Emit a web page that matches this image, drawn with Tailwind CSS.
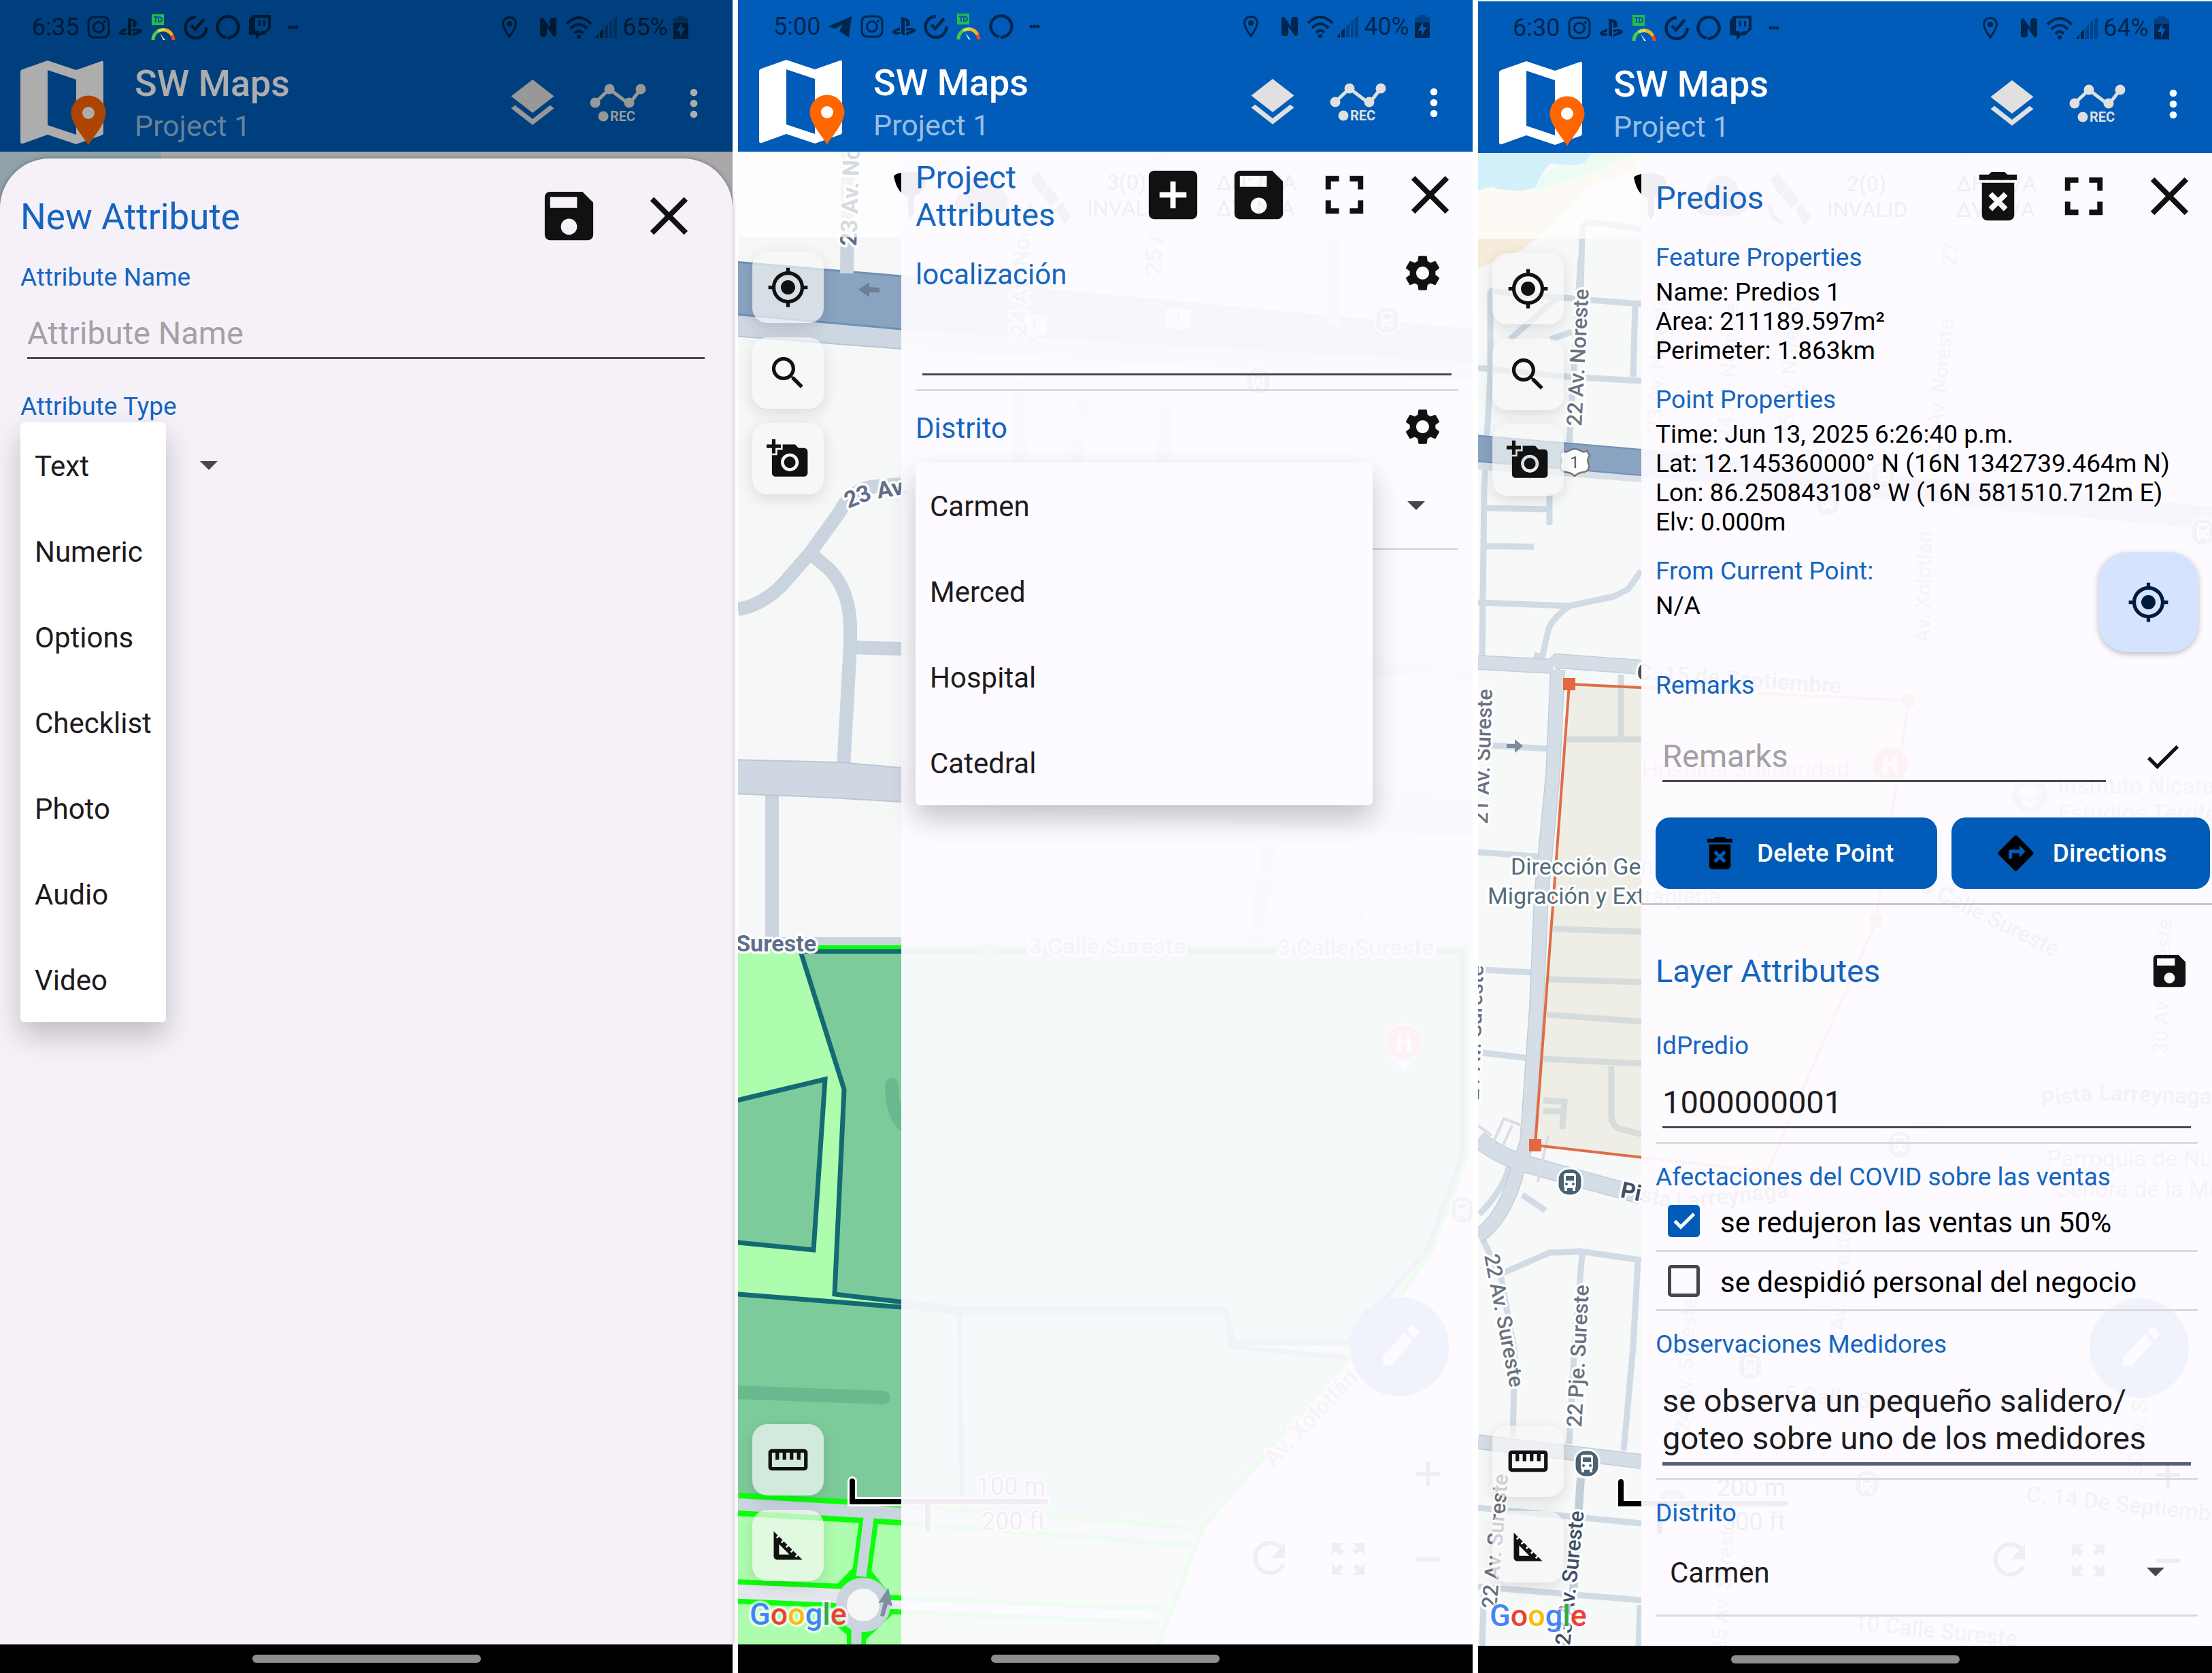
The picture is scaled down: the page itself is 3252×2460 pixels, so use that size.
<!DOCTYPE html>
<html lang="es">
<head>
<meta charset="utf-8">
<title>SW Maps</title>
<script src="https://cdn.jsdelivr.net/npm/@tailwindcss/browser@4"></script>
</head>
<body class="bg-white font-['Roboto',sans-serif] text-[#111]">

<svg width="0" height="0" class="absolute" aria-hidden="true">
  <defs>
    <symbol id="save" viewBox="0 0 24 24"><path d="M17 3H5c-1.11 0-2 .9-2 2v14c0 1.1.89 2 2 2h14c1.1 0 2-.9 2-2V7l-4-4zm-5 16c-1.66 0-3-1.34-3-3s1.34-3 3-3 3 1.34 3 3-1.34 3-3 3zm3-10H5V5h10v4z"/></symbol>
    <symbol id="close" viewBox="0 0 24 24"><path d="M19 6.41L17.59 5 12 10.59 6.41 5 5 6.41 10.59 12 5 17.59 6.41 19 12 13.41 17.59 19 19 17.59 13.41 12z"/></symbol>
    <symbol id="addbox" viewBox="0 0 24 24"><path d="M19 3H5c-1.11 0-2 .9-2 2v14c0 1.1.89 2 2 2h14c1.1 0 2-.9 2-2V5c0-1.1-.9-2-2-2zm-2 10h-4v4h-2v-4H7v-2h4V7h2v4h4v2z"/></symbol>
    <symbol id="full" viewBox="0 0 24 24"><path d="M7 14H5v5h5v-2H7v-3zm-2-4h2V7h3V5H5v5zm12 7h-3v2h5v-5h-2v3zM14 5v2h3v3h2V5h-5z"/></symbol>
    <symbol id="gear" viewBox="0 0 24 24"><path d="M19.14 12.94c.04-.3.06-.61.06-.94 0-.32-.02-.64-.07-.94l2.03-1.58c.18-.14.23-.41.12-.61l-1.92-3.32c-.12-.22-.37-.29-.59-.22l-2.39.96c-.5-.38-1.03-.7-1.62-.94L14.4 2.81c-.04-.24-.24-.41-.48-.41h-3.84c-.24 0-.43.17-.47.41l-.36 2.54c-.59.24-1.13.57-1.62.94l-2.39-.96c-.22-.08-.47 0-.59.22L2.74 8.87c-.12.21-.08.47.12.61l2.03 1.58c-.05.3-.09.63-.09.94s.02.64.07.94l-2.03 1.58c-.18.14-.23.41-.12.61l1.92 3.32c.12.22.37.29.59.22l2.39-.96c.5.38 1.03.7 1.62.94l.36 2.54c.05.24.24.41.48.41h3.84c.24 0 .44-.17.47-.41l.36-2.54c.59-.24 1.13-.56 1.62-.94l2.39.96c.22.08.47 0 .59-.22l1.92-3.32c.12-.22.07-.47-.12-.61l-2.01-1.58zM12 15.6c-1.98 0-3.6-1.62-3.6-3.6s1.62-3.6 3.6-3.6 3.6 1.62 3.6 3.6-1.62 3.6-3.6 3.6z"/></symbol>
    <symbol id="locate" viewBox="0 0 24 24"><path d="M12 8c-2.21 0-4 1.79-4 4s1.79 4 4 4 4-1.79 4-4-1.79-4-4-4zm8.94 3c-.46-4.17-3.77-7.48-7.94-7.94V1h-2v2.06C6.83 3.52 3.52 6.83 3.06 11H1v2h2.06c.46 4.17 3.77 7.48 7.94 7.94V23h2v-2.06c4.17-.46 7.48-3.77 7.94-7.94H23v-2h-2.06zM12 19c-3.87 0-7-3.13-7-7s3.13-7 7-7 7 3.13 7 7-3.13 7-7 7z"/></symbol>
    <symbol id="search" viewBox="0 0 24 24"><path d="M15.5 14h-.79l-.28-.27C15.41 12.59 16 11.11 16 9.5 16 5.91 13.09 3 9.5 3S3 5.91 3 9.5 5.91 16 9.5 16c1.61 0 3.09-.59 4.23-1.57l.27.28v.79l5 4.99L20.49 19l-4.99-5zm-6 0C7.01 14 5 11.99 5 9.5S7.01 5 9.5 5 14 7.01 14 9.5 11.99 14 9.5 14z"/></symbol>
    <symbol id="photo" viewBox="0 0 24 24"><path d="M3 4V1h2v3h3v2H5v3H3V6H0V4h3zm3 6V7h3V4h7l1.83 2H21c1.1 0 2 .9 2 2v12c0 1.1-.9 2-2 2H5c-1.1 0-2-.9-2-2V10h3zm7 9c2.76 0 5-2.24 5-5s-2.24-5-5-5-5 2.24-5 5 2.24 5 5 5zm-3.2-5c0 1.77 1.43 3.2 3.2 3.2s3.2-1.43 3.2-3.2-1.43-3.2-3.2-3.2-3.2 1.43-3.2 3.2z"/></symbol>
    <symbol id="ruler" viewBox="0 0 24 24"><path d="M21 6H3c-1.1 0-2 .9-2 2v8c0 1.1.9 2 2 2h18c1.1 0 2-.9 2-2V8c0-1.1-.9-2-2-2zm0 10H3V8h2v4h2V8h2v4h2V8h2v4h2V8h2v4h2V8h2v8z"/></symbol>
    <symbol id="square" viewBox="0 0 24 24"><path d="M17.66 17.66l-1.06 1.06-.71-.71 1.06-1.06-1.94-1.94-1.06 1.06-.71-.71 1.06-1.06-1.94-1.94-1.06 1.06-.71-.71 1.06-1.06L9.7 9.7l-1.06 1.06-.71-.71 1.06-1.06-1.94-1.94-1.06 1.06-.71-.71 1.06-1.06L4 4v14c0 1.1.9 2 2 2h14l-2.34-2.34zM7 17v-5.76L12.76 17H7z"/></symbol>
    <symbol id="trash" viewBox="0 0 24 24"><path d="M6 19c0 1.1.9 2 2 2h8c1.1 0 2-.9 2-2V7H6v12zm2.46-7.12l1.41-1.41L12 12.59l2.12-2.12 1.41 1.41L13.41 14l2.12 2.12-1.41 1.41L12 15.41l-2.12 2.12-1.41-1.41L10.59 14l-2.13-2.12zM15.5 4l-1-1h-5l-1 1H5v2h14V4z"/></symbol>
    <symbol id="directions" viewBox="0 0 24 24"><path d="M21.71 11.29l-9-9c-.39-.39-1.02-.39-1.41 0l-9 9c-.39.39-.39 1.02 0 1.41l9 9c.39.39 1.02.39 1.41 0l9-9c.39-.38.39-1.01 0-1.41zM14 14.5V12h-4v3H8v-4c0-.55.45-1 1-1h5V7.5l3.5 3.5-3.5 3.5z"/></symbol>
    <symbol id="check" viewBox="0 0 24 24"><path d="M9 16.17L4.83 12l-1.42 1.41L9 19 21 7l-1.41-1.41z"/></symbol>
    <symbol id="layers" viewBox="0 0 24 24"><path d="M11.99 18.54l-7.37-5.73L3 14.07l9 7 9-7-1.63-1.27-7.38 5.74zM12 16l7.36-5.73L21 9l-9-7-9 7 1.63 1.27L12 16z"/></symbol>
    <symbol id="more" viewBox="0 0 12 44"><circle cx="6" cy="6" r="5.3"/><circle cx="6" cy="22" r="5.3"/><circle cx="6" cy="38" r="5.3"/></symbol>
    <symbol id="rec" viewBox="0 0 84 58">
      <path d="M8 28 29 8 58 30 75 8" fill="none" stroke="currentColor" stroke-width="5"/>
      <circle cx="8" cy="28" r="7.5"/><circle cx="29" cy="8" r="7.5"/><circle cx="58" cy="28" r="7.5"/><circle cx="75" cy="8" r="7.5"/><circle cx="20" cy="48" r="7.5"/>
      <text x="30" y="55" font-size="20" font-weight="700">REC</text>
    </symbol>
    <symbol id="logo" viewBox="0 0 126 125">
      <path fill="#fff" fill-rule="evenodd" d="M0 17Q0 14 3 13L40 0 82 14 119 1Q122 0 122 4V107Q122 109 119 110L82 123 40 109 4 122Q0 123 0 119zM40 14V95L82 109V28z"/>
      <path fill="#f60" d="M100 51.500a25.500 25.500 0 0 1 25.500 25.500c0 16-19 36-25.500 47.500C93.500 113 74.500 93 74.500 77A25.500 25.500 0 0 1 100 51.500z"/>
      <circle cx="100" cy="77" r="9" fill="#fff"/>
    </symbol>
    <symbol id="caret" viewBox="0 0 26 13"><path d="M0 0h26L13 13z"/></symbol>
    <symbol id="ig" viewBox="0 0 36 36"><rect x="3" y="3" width="30" height="30" rx="8" fill="none" stroke="currentColor" stroke-width="3"/><circle cx="18" cy="18" r="7.500" fill="none" stroke="currentColor" stroke-width="3"/><circle cx="27" cy="10" r="2"/></symbol>
    <symbol id="ps" viewBox="0 0 36 36"><path d="M14 4l7 2c4 1 6 4 6 7 0 4-2 6-6 4V10q-1-2-2 0v21l-5-2zM12 19v4l-6 2.500 2 1 4-1v3.500c-6 2-11 0-11-3 0-3 6-5 11-7zM21 21c6-2 14-1 14 2.500 0 3-6 4.500-14 7.500v-4l7-3-2-1-5 1.500z"/></symbol>
    <symbol id="speed" viewBox="0 0 36 38"><rect x="1" y="0" width="18" height="16" fill="#1fbf46"/><path d="M4 4h6M7 4v8M11 4v7q5 0 5-3.500T11 4" stroke="#0f4fb0" stroke-width="2" fill="none"/><path d="M3 38A15 15 0 0 1 10 25" stroke="#4cc94a" stroke-width="5" fill="none"/><path d="M10 25A15 15 0 0 1 21 23" stroke="#d5e04a" stroke-width="5" fill="none"/><path d="M21 23A15 15 0 0 1 31 31" stroke="#fbb31c" stroke-width="5" fill="none"/><path d="M31 31A15 15 0 0 1 33 38" stroke="#f04a23" stroke-width="5" fill="none"/><path d="M13 28l8 10h-3z" fill="#dfe9f3"/></symbol>
    <symbol id="tick" viewBox="0 0 36 36"><path d="M18 3A15.500 15.500 0 1 0 33.500 18" fill="none" stroke="currentColor" stroke-width="4.500"/><path d="M11 15l6 6L30 6" fill="none" stroke="currentColor" stroke-width="4.500"/></symbol>
    <symbol id="ring" viewBox="0 0 36 36"><path d="M15 33A15.500 15.500 0 1 1 21 33L17 35" fill="none" stroke="currentColor" stroke-width="4.500"/></symbol>
    <symbol id="twitch" viewBox="0 0 36 36"><path fill-rule="evenodd" d="M8 0h26v20l-9 9h-6l-7 7v-7H2V7zm3 4v19h6v4l4-4h5l4-4V4zM16 8h3v8h-3zm7 0h3v8h-3z"/></symbol>
    <symbol id="plane" viewBox="0 0 36 36"><path d="M35 3 31 34 17 25 22 14 12 21 0 18z"/></symbol>
    <symbol id="pin" viewBox="0 0 24 34"><path d="M12 2.500c6 0 9.500 4 9.500 9C21.500 18 12 31 12 31S2.500 18 2.500 11.500c0-5 3.500-9 9.500-9z" fill="none" stroke="currentColor" stroke-width="3"/><circle cx="12" cy="12" r="4"/></symbol>
    <symbol id="nfc" viewBox="0 0 26 28"><path d="M1 3Q1 0 5 0L15 14V4Q15 1 18 0H23Q25 1 25 4V25Q25 28 21 28L11 14V24Q11 27 8 28H4Q1 27 1 24z"/></symbol>
    <symbol id="wifi" viewBox="0 0 40 34"><path d="M2 12Q20-6 38 12M8 19Q20 7 32 19M14 26Q20 19 26 26" fill="none" stroke="currentColor" stroke-width="4"/><circle cx="20" cy="31" r="3"/></symbol>
    <symbol id="signal" viewBox="0 0 32 32"><path d="M0 32l5-7v7zM7 23l5-5v14H7z"/><path opacity=".45" d="M14 16l5-5v21h-5zM21 9l4-4v27h-4zM27 4l5-4v32h-5z"/></symbol>
    <symbol id="battery" viewBox="0 0 22 34"><path opacity=".45" d="M6 0h10v3h6v8H0V3h6z"/><path fill-rule="evenodd" d="M0 11h22v23H0zm12-1-7 13h5v8l7-13h-5z"/></symbol>
    <symbol id="bus" viewBox="0 0 40 44"><rect x="2" y="2" width="36" height="40" rx="16" fill="#4a6274" stroke="#fff" stroke-width="3"/><rect x="11" y="9" width="18" height="22" rx="4" fill="#fff"/><rect x="14" y="13" width="12" height="7" fill="#4a6274"/><circle cx="15" cy="25" r="2" fill="#4a6274"/><circle cx="25" cy="25" r="2" fill="#4a6274"/><path d="M12 30h4v5h-4zM24 30h4v5h-4z" fill="#fff"/></symbol>
    <symbol id="shield" viewBox="0 0 48 44"><path d="M6 5q5 3 9 0 5-3 9-3t9 3q4 3 9 0l4 7q-5 6-1 14 1 8-7 10-9 1-14 6-5-5-14-6-8-2-7-10 4-8-1-14z" fill="#fff" stroke="#777" stroke-width="2.500"/><text x="24" y="30" text-anchor="middle" font-size="24" fill="#555">1</text></symbol>
    <symbol id="hospital" viewBox="0 0 64 80"><path d="M32 3a28 28 0 0 1 28 28c0 20-22 26-28 44C26 57 4 51 4 31A28 28 0 0 1 32 3z" fill="#f0f0f0"/><circle cx="32" cy="31" r="26" fill="#f2554a"/><path d="M22 18h6v10h8V18h6v27h-6V34h-8v11h-6z" fill="#fff"/></symbol>
    <symbol id="hud" viewBox="0 0 1080 2195">
      <path d="M229 36q4-6 26-6 14 0 22 10-2 20-18 26v24l-5 8-4-8V66q-16-4-21-30z"/>
      <path d="M335 92a16 16 0 0 1 0-32 24 24 0 0 1 48-6 20 20 0 0 1 0 38z" opacity=".7"/>
      <path d="M430 40l12-12 14 22-12 12zM446 62l12-12 14 20-12 12zM466 84l10-10 14 20-10 12zM426 76q0 26 22 28v-6q-14-2-16-22z" opacity=".7"/>
      <g font-size="32"><text x="703" y="56">ΔH: N/A</text><text x="703" y="94">ΔV: N/A</text><text x="513" y="94">INVALID</text></g>
      <circle cx="972" cy="1757" r="73" fill="#0a64b4"/><path d="M948 1784v-13l32-34 12 12-32 35zM984 1733l8-8 11 11-8 9z" fill="#fff"/>
      <path d="M996 1941h36v6h-36zM1011 1926h6v36h-6zM996 2067h36v6h-36z"/>
      <path d="M801 2056a22 22 0 1 0 1 22" fill="none" stroke="currentColor" stroke-width="6"/><path d="M804 2046v22h-21z"/>
      <path d="M873 2046h17l-6 6 6 6-6 6-5-6-6 6zM921 2046v17l-6-6-6 6-5-6 6-5-6-6zM873 2093v-17l6 6 6-6 5 6-6 5 6 6zM921 2093h-17l6-6-6-6 5-5 6 6 6-6z"/>
    </symbol>
  </defs>
</svg>

<div class="grid min-h-screen grid-cols-[1077fr_1080fr_1079fr] gap-2">

  <!-- New attribute -->
  <section class="flex min-w-0 flex-col bg-[#aaa8ab]">
    <header class="bg-[#003f7d]">
      <div class="flex h-[80px] items-center justify-between pl-[47px] pr-[65px] text-[36px] leading-[42px] text-[#001a33]">
        <div class="flex items-center gap-[11px]">
          <span>6:35</span>
          <svg class="size-[36px] fill-current"><use href="#ig"/></svg><svg class="size-[36px] fill-current"><use href="#ps"/></svg><svg class="size-[38px]"><use href="#speed"/></svg><svg class="size-[36px] fill-current"><use href="#tick"/></svg><svg class="size-[36px] fill-current"><use href="#ring"/></svg><svg class="size-[36px] fill-current"><use href="#twitch"/></svg>
          <svg class="ml-3 h-[6px] w-[16px] fill-current" viewBox="0 0 16 6"><circle cx="3" cy="3" r="2.500"/><circle cx="8" cy="3" r="2.500"/><circle cx="13" cy="3" r="2.500"/></svg>
        </div>
        <div class="flex items-center gap-2">
          <svg class="mr-6 h-[34px] w-[24px] fill-current"><use href="#pin"/></svg><svg class="mr-1 h-[28px] w-[26px] fill-current"><use href="#nfc"/></svg><svg class="h-[34px] w-[40px] fill-current"><use href="#wifi"/></svg><svg class="-ml-1 h-[32px] w-[32px] fill-current"><use href="#signal"/></svg>
          <span>65%</span>
          <svg class="h-[34px] w-[22px] fill-current"><use href="#battery"/></svg>
        </div>
      </div>
      <div class="flex h-[143px] items-center pl-[30px] pr-[10px] brightness-[.68]">
        <svg class="h-[125px] w-[126px]"><use href="#logo"/></svg>
        <div class="ml-[42px] flex-1 pt-[4px]">
          <h1 class="text-[54px] leading-[63px] font-medium text-white">SW Maps</h1>
          <p class="text-[43px] leading-[63px] text-[#99bee3]">Project 1</p>
        </div>
        <button aria-label="Layers" class="grid w-[126px] place-items-center"><svg class="size-[84px] fill-[#e0e0e0]"><use href="#layers"/></svg></button>
        <button aria-label="Record track" class="grid w-[126px] place-items-center"><svg class="h-[58px] w-[84px] fill-[#e0e0e0] text-[#e0e0e0]"><use href="#rec"/></svg></button>
        <button aria-label="More" class="grid w-[95px] place-items-center"><svg class="h-[44px] w-[12px] fill-white"><use href="#more"/></svg></button>
      </div>
    </header>
    <main class="flex flex-1 flex-col bg-linear-to-r from-[#90a2a9] from-22% to-[#aaa8ab] to-22% pt-[10px]">
      <form class="flex-1 rounded-t-[73px] bg-[#f6f1f9] pt-[37px] pr-[31px] pl-[30px] shadow-[0_0_6px_rgba(0,0,0,.35)]">
        <div class="flex h-[95px] items-center">
          <h2 class="flex-1 pt-[4px] text-[53px] leading-[61px] text-[#1565c0]">New Attribute</h2>
          <button type="button" aria-label="Save" class="mr-[52px]"><svg class="size-[95px] fill-[#111]"><use href="#save"/></svg></button>
          <button type="button" aria-label="Close" class="mr-[15px]"><svg class="size-[95px] fill-[#111]"><use href="#close"/></svg></button>
        </div>
        <label for="attr-name" class="mt-[21px] block text-[37px] leading-[43px] text-[#1565c0]">Attribute Name</label>
        <div class="mt-[23px] px-[10px]"><input id="attr-name" placeholder="Attribute Name" class="block h-[76px] w-full border-b-3 border-[#4a474e] pt-[2px] text-[47px] leading-[55px] outline-none placeholder:text-[#a3a0a6]"></div>
        <label for="attr-type" class="mt-12 block text-[37px] leading-[43px] text-[#1565c0]">Attribute Type</label>
        <div class="relative mt-[2px] w-[339px]">
          <select id="attr-type" class="block h-[126px] w-full appearance-none pl-[21px] text-[42px] text-[#1d1b20]"><option>Text</option></select>
          <svg class="pointer-events-none absolute top-[57px] right-[49px] h-[13px] w-[26px] fill-[#49454f]"><use href="#caret"/></svg>
          <ul role="listbox" class="absolute top-0 left-0 rounded-[6px] bg-white text-[42px] leading-[122px] text-[#1d1b20] shadow-[0_20px_42px_rgba(0,0,0,.22)] [&>li]:px-[21px] [&>li]:pt-[4px]">
            <li role="option">Text</li><li role="option">Numeric</li><li role="option">Options</li><li role="option">Checklist</li><li role="option">Photo</li><li role="option">Audio</li><li role="option">Video</li>
          </ul>
        </div>
      </form>
    </main>
    <footer class="grid h-[42px] place-items-center bg-black"><div class="h-[12px] w-[336px] rounded-full bg-[#8e8e8e]"></div></footer>
  </section>

  <!-- Project attributes -->
  <section class="flex min-w-0 flex-col">
    <header class="bg-[#005cb8]">
      <div class="flex h-[78px] items-center justify-between pl-[52px] pr-[63px] text-[36px] leading-[42px] text-[#00264d]">
        <div class="flex items-center gap-[11px]">
          <span>5:00</span>
          <svg class="size-[36px] fill-current"><use href="#plane"/></svg><svg class="size-[36px] fill-current"><use href="#ig"/></svg><svg class="size-[36px] fill-current"><use href="#ps"/></svg><svg class="size-[36px] fill-current"><use href="#tick"/></svg><svg class="size-[38px]"><use href="#speed"/></svg><svg class="size-[36px] fill-current"><use href="#ring"/></svg>
          <svg class="ml-3 h-[6px] w-[16px] fill-current" viewBox="0 0 16 6"><circle cx="3" cy="3" r="2.500"/><circle cx="8" cy="3" r="2.500"/><circle cx="13" cy="3" r="2.500"/></svg>
        </div>
        <div class="flex items-center gap-2">
          <svg class="mr-6 h-[34px] w-[24px] fill-current"><use href="#pin"/></svg><svg class="mr-1 h-[28px] w-[26px] fill-current"><use href="#nfc"/></svg><svg class="h-[34px] w-[40px] fill-current"><use href="#wifi"/></svg><svg class="-ml-1 h-[32px] w-[32px] fill-current"><use href="#signal"/></svg>
          <span>40%</span>
          <svg class="h-[34px] w-[22px] fill-current"><use href="#battery"/></svg>
        </div>
      </div>
      <div class="flex h-[145px] items-center pl-[31px] pr-[10px]">
        <svg class="h-[125px] w-[126px]"><use href="#logo"/></svg>
        <div class="ml-[42px] flex-1 pt-[4px]">
          <h1 class="text-[54px] leading-[63px] font-medium text-white">SW Maps</h1>
          <p class="text-[43px] leading-[63px] text-[#99bee3]">Project 1</p>
        </div>
        <button aria-label="Layers" class="grid w-[126px] place-items-center"><svg class="size-[84px] fill-[#e0e0e0]"><use href="#layers"/></svg></button>
        <button aria-label="Record track" class="grid w-[126px] place-items-center"><svg class="h-[58px] w-[84px] fill-[#e0e0e0] text-[#e0e0e0]"><use href="#rec"/></svg></button>
        <button aria-label="More" class="grid w-[95px] place-items-center"><svg class="h-[44px] w-[12px] fill-white"><use href="#more"/></svg></button>
      </div>
    </header>
    <main class="relative flex flex-1 overflow-hidden">
      <svg class="absolute inset-0 size-full" viewBox="0 223 1080 2195" preserveAspectRatio="xMinYMin slice" aria-hidden="true">
        <rect y="223" width="1080" height="2195" fill="#f6f7f7"/>
        <g fill="none" stroke="#c9d4df" stroke-width="20">
          <path d="M-5 462L240 484 1085 531V560L240 513-5 494z" fill="#cdd7e1" stroke="#b5c6d6" stroke-width="2"/>
          <path d="M-5 385L240 406 1085 486V531L240 484-5 462z" fill="#8aa3c0" stroke="#6e90b8" stroke-width="3"/>
          <path d="M162 223L160 402M412 560L415 700M505 580L495 760M630 600L620 760M875 350V480"/>
          <path d="M240 712L195 716Q165 722 150 752L106 813 65 860Q35 890 0 896M106 813L135 838Q165 870 165 925V950L155 1130M165 952L240 954 1080 990M50 1165V1380M780 1245L760 1380M780 1306H870M770 1352H920"/>
        </g>
        <path d="M-5 1117L150 1121 240 1129 1085 1170V1230L240 1179 120 1172-5 1167z" fill="#cfd8e2" stroke="#b9c8d5" stroke-width="2"/>
        <path d="M0 1384H1080" stroke="#c9d4df" stroke-width="12"/>
        <path d="M-20 1394H1070V1701L1020 1836 975 1903 899 1994 683 2245 610 2440H-20z" fill="#aefcae" stroke="#0bff0b" stroke-width="8"/>
        <g fill="#7dcb9b" stroke="#136a72" stroke-width="7">
          <path d="M92 1399H1064V1701L1014 1836 895 1975H730L718 1925H332L142 1903 156 1602z"/>
          <path d="M-10 1620L128 1587 111 1838-10 1826z"/>
        </g>
        <path d="M0 1903L240 1922 332 1930H718L725 1980 895 1996 680 2239 240 2219 0 2198z" fill="#7dcb9b"/>
        <path d="M0 1903L240 1922 332 1930H718L725 1980 895 1996" fill="none" stroke="#136a72" stroke-width="7"/>
        <path d="M325 1932L330 2220" stroke="#136a72" stroke-width="7"/>
        <path d="M-10 2047L214 2055M226 1595Q226 1640 245 1655H725Q755 1660 758 1700V1790Q760 1830 800 1838H1000M345 1670V1800Q350 1830 380 1832H450M368 1405V1560" fill="none" stroke="#68b98d" stroke-width="20" stroke-linecap="round"/>
        <g fill="none" stroke="#0bff0b">
          <path d="M0 2212L240 2226 675 2260" stroke-width="34"/><path d="M193 2231L181 2318" stroke-width="28"/><path d="M-5 2340L155 2347" stroke-width="36"/><path d="M215 2359L240 2360 620 2376" stroke-width="28"/><path d="M174 2390V2420" stroke-width="28"/>
          <path d="M181 2310L150 2342M181 2310L216 2354M218 2366L180 2402M145 2375L172 2398" stroke-width="24"/>
        </g>
        <g fill="none" stroke="#c9d4df">
          <path d="M0 2212L240 2226 675 2260" stroke-width="18"/><path d="M193 2225L181 2318" stroke-width="15"/><path d="M-5 2340L155 2347" stroke="#e3e6ea" stroke-width="21"/><path d="M215 2359L240 2360 620 2376" stroke="#eceff3" stroke-width="13"/><path d="M174 2390V2420" stroke-width="15"/>
        </g>
        <circle cx="184" cy="2360" r="40" fill="#c9d4df"/><circle cx="184" cy="2360" r="24" fill="#f6f7f7"/>
        <path d="M209 2376l5-20-8 1 15-22 6 27-7-3-5 18z" fill="#7f8fa0"/>
        <path d="M177 426l16-11v7l15 1v7h-15v7z" fill="#6d7f95"/>
        <use href="#shield" x="411" y="458" width="48" height="44"/><use href="#shield" x="623" y="447" width="48" height="44"/>
        <use href="#bus" x="934" y="449" width="40" height="44"/><use href="#bus" x="745" y="538" width="40" height="44"/><use href="#bus" x="1045" y="1757" width="40" height="44"/>
        <use href="#hospital" x="947" y="1502" width="64" height="80"/>
        <g font-size="34" font-weight="700" fill="#5f7089" stroke="#fff" stroke-width="7" stroke-linejoin="round" paint-order="stroke">
          <text x="115" y="1399" text-anchor="end">Sureste</text><text x="427" y="1403">3 Calle Sureste</text><text x="793" y="1405">3 Calle Sureste</text>
          <text transform="translate(174 362) rotate(-88)">23 Av. Noreste</text><text transform="translate(424 495) rotate(-88)">24 Av. Noreste</text><text transform="translate(622 405) rotate(-88)">25 Av. Noreste</text>
          <text transform="translate(162 748) rotate(-22)">23</text><text transform="translate(206 733) rotate(-9)">Av. Noreste</text>
          <text transform="translate(787 2158) rotate(-46)">Av. Xolotlán</text>
        </g>
        <rect y="223" width="1080" height="126" fill="#fff" opacity=".75"/>
        <use href="#hud" y="223" width="1080" height="2195"/><text x="542" y="279" font-size="32">3(0)</text>
        <path d="M168 2178V2208H452M279 2208V2248" fill="none" stroke="#fff" stroke-width="14" stroke-linecap="round"/>
        <path d="M168 2178V2208H452M279 2208V2248" fill="none" stroke="#000" stroke-width="8" stroke-linecap="round"/>
        <g font-size="36" text-anchor="end" stroke="#fff" stroke-width="6" paint-order="stroke"><text x="452" y="2198">100 m</text><text x="452" y="2249">200 ft</text></g>
        <text x="17" y="2389" font-size="45" font-weight="500" stroke="#fff" stroke-opacity=".7" stroke-width="7" paint-order="stroke"><tspan fill="#4285f4">G</tspan><tspan fill="#ea4335">o</tspan><tspan fill="#fbbc05">o</tspan><tspan fill="#4285f4">g</tspan><tspan fill="#34a853">l</tspan><tspan fill="#ea4335">e</tspan></text>
      </svg>
      <aside class="relative flex w-[240px] shrink-0 flex-col gap-[21px] pt-[147px] pb-[93px] pl-[21px]">
        <button aria-label="My location" class="grid size-[105px] place-items-center rounded-[22px] bg-[#f6f6f6]/70 shadow-[0_6px_22px_rgba(0,0,0,.12)]"><svg class="size-[63px] fill-[#111]"><use href="#locate"/></svg></button>
        <button aria-label="Search" class="grid size-[105px] place-items-center rounded-[22px] bg-[#f6f6f6]/70 shadow-[0_6px_22px_rgba(0,0,0,.12)]"><svg class="size-[63px] fill-[#111]"><use href="#search"/></svg></button>
        <button aria-label="Add photo" class="grid size-[105px] place-items-center rounded-[22px] bg-[#f6f6f6]/70 shadow-[0_6px_22px_rgba(0,0,0,.12)]"><svg class="size-[63px] fill-[#111]"><use href="#photo"/></svg></button>
        <button aria-label="Measure distance" class="mt-auto grid size-[105px] place-items-center rounded-[22px] bg-[#f6f6f6]/70 shadow-[0_6px_22px_rgba(0,0,0,.12)]"><svg class="size-[63px] fill-[#111]"><use href="#ruler"/></svg></button>
        <button aria-label="Measure area" class="grid size-[105px] place-items-center rounded-[22px] bg-[#f6f6f6]/70 shadow-[0_6px_22px_rgba(0,0,0,.12)]"><svg class="size-[63px] fill-[#111]"><use href="#square"/></svg></button>
      </aside>
      <form class="relative min-w-0 flex-1 bg-[#fdfbff]/95 px-[21px]">
        <div class="-mr-[21px] flex h-[126px] items-center">
          <h2 class="flex-1 pt-[4px] text-[47px] leading-[55px] text-[#1565c0]">Project Attributes</h2>
          <button type="button" aria-label="Add" class="grid w-[126px] place-items-center"><svg class="size-[95px] fill-[#111]"><use href="#addbox"/></svg></button>
          <button type="button" aria-label="Save" class="grid w-[126px] place-items-center"><svg class="size-[95px] fill-[#111]"><use href="#save"/></svg></button>
          <button type="button" aria-label="Full screen" class="grid w-[126px] place-items-center"><svg class="size-[95px] fill-[#111]"><use href="#full"/></svg></button>
          <button type="button" aria-label="Close" class="grid w-[126px] place-items-center"><svg class="size-[95px] fill-[#111]"><use href="#close"/></svg></button>
        </div>
        <div class="mt-[21px] flex h-[63px] items-center justify-between pr-[21px]">
          <label for="loc" class="pt-[4px] text-[42px] leading-[49px] text-[#1565c0]">localización</label>
          <button type="button" aria-label="Settings"><svg class="size-[63px] fill-[#111]"><use href="#gear"/></svg></button>
        </div>
        <div class="mt-[43px] px-[10px]"><input id="loc" class="block h-[76px] w-full border-b-3 border-[#4a474e] text-[47px] outline-none"></div>
        <hr class="mt-5 border-t-3 border-[#dcdadd]">
        <div class="mt-[21px] flex h-[63px] items-center justify-between pr-[21px]">
          <label for="dist2" class="pt-[4px] text-[42px] leading-[49px] text-[#1565c0]">Distrito</label>
          <button type="button" aria-label="Settings"><svg class="size-[63px] fill-[#111]"><use href="#gear"/></svg></button>
        </div>
        <div class="relative mt-[21px]">
          <select id="dist2" class="block h-[126px] w-full appearance-none pl-[21px] text-[42px] text-[#1d1b20]"><option>Carmen</option></select>
          <svg class="pointer-events-none absolute top-[57px] right-[49px] h-[13px] w-[26px] fill-[#49454f]"><use href="#caret"/></svg>
          <ul role="listbox" class="absolute top-0 left-0 w-[672px] rounded-[6px] bg-[#fdfbff] text-[42px] leading-[122px] text-[#1d1b20] shadow-[0_20px_42px_rgba(0,0,0,.22)] [&>li]:px-[21px] [&>li]:pt-[4px]">
            <li role="option">Carmen</li><li role="option">Merced</li><li role="option">Hospital</li><li role="option">Catedral</li>
          </ul>
        </div>
        <hr class="border-t-3 border-[#dcdadd]">
      </form>
    </main>
    <footer class="grid h-[42px] place-items-center bg-black"><div class="h-[12px] w-[336px] rounded-full bg-[#8e8e8e]"></div></footer>
  </section>

  <!-- Feature attributes -->
  <section class="flex min-w-0 flex-col pt-[2px]">
    <header class="bg-[#005cb8]">
      <div class="flex h-[78px] items-center justify-between pl-[51px] pr-[63px] text-[36px] leading-[42px] text-[#00264d]">
        <div class="flex items-center gap-[11px]">
          <span>6:30</span>
          <svg class="size-[36px] fill-current"><use href="#ig"/></svg><svg class="size-[36px] fill-current"><use href="#ps"/></svg><svg class="size-[38px]"><use href="#speed"/></svg><svg class="size-[36px] fill-current"><use href="#tick"/></svg><svg class="size-[36px] fill-current"><use href="#ring"/></svg><svg class="size-[36px] fill-current"><use href="#twitch"/></svg>
          <svg class="ml-3 h-[6px] w-[16px] fill-current" viewBox="0 0 16 6"><circle cx="3" cy="3" r="2.500"/><circle cx="8" cy="3" r="2.500"/><circle cx="13" cy="3" r="2.500"/></svg>
        </div>
        <div class="flex items-center gap-2">
          <svg class="mr-6 h-[34px] w-[24px] fill-current"><use href="#pin"/></svg><svg class="mr-1 h-[28px] w-[26px] fill-current"><use href="#nfc"/></svg><svg class="h-[34px] w-[40px] fill-current"><use href="#wifi"/></svg><svg class="-ml-1 h-[32px] w-[32px] fill-current"><use href="#signal"/></svg>
          <span>64%</span>
          <svg class="h-[34px] w-[22px] fill-current"><use href="#battery"/></svg>
        </div>
      </div>
      <div class="flex h-[145px] items-center pl-[31px] pr-[10px]">
        <svg class="h-[125px] w-[126px]"><use href="#logo"/></svg>
        <div class="ml-[42px] flex-1 pt-[4px]">
          <h1 class="text-[54px] leading-[63px] font-medium text-white">SW Maps</h1>
          <p class="text-[43px] leading-[63px] text-[#99bee3]">Project 1</p>
        </div>
        <button aria-label="Layers" class="grid w-[126px] place-items-center"><svg class="size-[84px] fill-[#e0e0e0]"><use href="#layers"/></svg></button>
        <button aria-label="Record track" class="grid w-[126px] place-items-center"><svg class="h-[58px] w-[84px] fill-[#e0e0e0] text-[#e0e0e0]"><use href="#rec"/></svg></button>
        <button aria-label="More" class="grid w-[95px] place-items-center"><svg class="h-[44px] w-[12px] fill-white"><use href="#more"/></svg></button>
      </div>
    </header>
    <main class="relative flex flex-1 overflow-hidden">
      <svg class="absolute inset-0 size-full" viewBox="0 225 1080 2195" preserveAspectRatio="xMinYMin slice" aria-hidden="true">
        <rect y="225" width="1080" height="2195" fill="#f7f8f8"/>
        <path d="M0 225H240L232 250 160 275 85 351 60 370 0 395z" fill="#f5ecdb"/>
        <path d="M150 225H230L170 254 85 281 92 258z" fill="#b4f4d2"/>
        <path d="M0 225H168L155 240 140 243 105 241 92 258 85 276 60 281 30 278 20 275 0 280z" fill="#52c6ec"/>
        <g fill="none" stroke="#d0dbe5" stroke-width="9">
          <path d="M151 430L153 340Q154 325 170 327L240 337M18 426V550L9 717 6 977M16 428L113 437 240 447M47 499L117 437M0 541L131 554 240 560M231 447L228 554M106 499L138 488M151 380L134 654M13 747L106 749M105 725V772M6 803L82 804M240 839L221 866 200 877 134 891 0 886M134 891Q108 910 103 927L93 973M82 978L88 960"/>
          <path d="M20 1096L103 1101M0 1253L96 1260M9 1426L82 1430M6 1548L75 1556M65 1757L99 1780M47 1707Q42 1745 2 1785M6 1820L34 1880 54 1990 51 2113M34 1873L105 1842 151 1840 240 1853M153 1843L141 1993 134 2123M235 1853L228 1980 214 2133M0 2217L240 2240M0 2333L240 2353M238 2360L236 2420M6 2420L9 2330"/>
          <path d="M330 640L350 1000M460 400L440 900M800 470V900M950 430L1060 455M240 1440H560M280 1690L620 1680M450 1720L700 1640 880 1590H1000M240 2240L700 2310 1080 2350M400 1900L740 1960V2420M500 2120L1080 2160M620 2120L600 2420M900 2000L870 2420" opacity=".7"/>
        </g>
        <path d="M-5 640L240 661 1085 747V792L240 709-5 690z" fill="#d8e0e7"/>
        <path d="M-5 640L240 661 1085 747V778L240 699-5 678z" fill="#8aa3c0" stroke="#6e90b8" stroke-width="2"/>
        <path d="M134 1006L633 1030 585 1355 425 1723 84 1684z" fill="#eeeee7"/>
        <g fill="none" stroke="#d5dcdb" stroke-width="9"><path d="M210 992V1085M131 1087H240M110 1366L240 1370M103 1440L240 1444M101 1492L240 1502M96 1557L240 1564M196 1567V1650M196 1640Q197 1660 217 1662L240 1668M96 1618L127 1620 124 1660M96 1634H124"/></g>
        <g fill="none" stroke="#c3ced8" stroke-width="22"><path d="M0 974L110 980M0 2120L240 2149"/><path d="M110 979L117 972 240 981 650 1000 655 1200"/><path d="M117 985L110 1139 93 1317 86 1480 72 1680 58 1720Q40 1790 0 1818"/><path d="M0 1675Q30 1700 75 1713L240 1758" stroke-width="26"/><path d="M151 2173L140 2340 130 2420" stroke-width="12"/></g>
        <g fill="none" stroke="#d5dee6" stroke-width="19"><path d="M0 974L110 980M0 2120L240 2149"/><path d="M110 979L117 972 240 981 650 1000 655 1200"/><path d="M117 985L110 1139 93 1317 86 1480 72 1680 58 1720Q40 1790 0 1818"/><path d="M0 1675Q30 1700 75 1713L240 1758" stroke-width="23"/></g>
        <path d="M103 1670L88 1738M20 1685L38 1645 65 1655M34 1690L50 1655M0 1655L20 1670" fill="none" stroke="#dcdce8" stroke-width="4"/>
        <path d="M134 1006L633 1030 585 1355 425 1723 84 1684z" fill="none" stroke="#e06c45" stroke-width="4"/>
        <g fill="#e2683f"><path d="M125 997h18v18h-18zM75 1675h18v18H75zM624 1021h18v18h-18zM576 1346h18v18h-18z"/></g>
        <path d="M42 1094h12v-7l12 10-12 10v-7H42z" fill="#7f8b98"/>
        <use href="#shield" x="117" y="658" width="50" height="44"/>
        <use href="#bus" x="115" y="1716" width="40" height="44"/><use href="#bus" x="140" y="2130" width="40" height="44"/><use href="#bus" x="576" y="676" width="40" height="44"/><use href="#bus" x="494" y="716" width="40" height="44"/><use href="#bus" x="1046" y="760" width="40" height="44"/><use href="#bus" x="600" y="1661" width="40" height="44"/><use href="#bus" x="380" y="1987" width="40" height="44"/><use href="#bus" x="552" y="2160" width="40" height="44"/>
        <use href="#hospital" x="574" y="1093" width="64" height="80"/>
        <circle cx="811" cy="1169" r="26" fill="#8b9bb0"/><path d="M793 1164l18-12 18 12-18 12zM800 1174l11 7 11-7v9l-11 6-11-6z" fill="#fff"/>
        <circle cx="286" cy="2212" r="22" fill="#3aa0a0"/>
        <g font-size="31" font-weight="500" fill="#6b7280" stroke="#fff" stroke-width="7" stroke-linejoin="round" paint-order="stroke">
          <text transform="translate(152 627) rotate(-87)">22 Av. Noreste</text>
          <text transform="translate(14 1212) rotate(-88)">21 Av. Sureste</text><text transform="translate(1 1618) rotate(-88)">21 Av. Sureste</text>
          <text transform="translate(9 1846) rotate(79)">22 Av. Sureste</text><text transform="translate(152 2099) rotate(-87)">22 Pje. Sureste</text><text transform="translate(27 2366) rotate(-85)">22 Av. Sureste</text>
          <text transform="translate(135 2420) rotate(-84)" fill="#3f5068">23 Av. Sureste</text>
          <text transform="translate(269 636) rotate(-87)">23 Av. Noreste</text><text transform="translate(373 648) rotate(-87)">24 Av. Noreste</text><text transform="translate(463 644) rotate(-87)">25 Av. Noreste</text><text transform="translate(678 671) rotate(-84)">27 Av. Noreste</text><text transform="translate(703 392) rotate(-84)">27 Av. Noreste</text><text transform="translate(664 945) rotate(-89)">Av. Xolotlán</text>
          <text transform="translate(1013 1550) rotate(-88)">30 Av. Sureste</text><text transform="translate(311 2107) rotate(-87)">24 Av. Sureste</text><text transform="translate(536 2000) rotate(-86)">26 Av. Sureste</text><text transform="translate(364 2430) rotate(-86)">25 Av. Sureste</text><text transform="translate(976 2170) rotate(-86)">30 Av. Sureste</text>
        </g>
        <g font-size="34" fill="#526c7a" stroke="#fff" stroke-width="7" stroke-linejoin="round" paint-order="stroke">
          <text x="48" y="1286">Dirección General</text><text x="14" y="1329">Migración y Extranjeria</text>
          <text x="852" y="1167">Instituto Nicaragüense</text><text x="852" y="1207">Estudios Territoriales</text><text x="836" y="1715">Parroquia de Nuestra</text><text x="850" y="1760">Señora de la Merced</text><text x="241" y="1143" fill="#e05a50">Hospital Solidaridad</text>
        </g>
        <g font-size="33" font-weight="700" fill="#3f5068" stroke="#fff" stroke-width="7" stroke-linejoin="round" paint-order="stroke">
          <text transform="translate(233 999) rotate(4)">C. 15 de Septiembre</text><text transform="translate(208 1760) rotate(12)">Pista</text><text transform="translate(292 1778) rotate(-6)">Larreynaga</text>
          <text transform="translate(829 1628) rotate(-8)">Pista</text><text transform="translate(912 1618) rotate(2)">Larreynaga</text><text transform="translate(648 1310) rotate(26)" font-weight="500">3 Calle Sureste</text><text transform="translate(449 2060) rotate(5)" font-weight="500">5 Calle Sureste</text><text transform="translate(805 2208) rotate(6)" font-weight="500">C. 14 De Septiembre</text><text transform="translate(552 2396) rotate(6)" font-weight="500">10 Calle Sureste</text>
        </g>
        <rect y="225" width="1080" height="126" fill="#fff" opacity=".75"/>
        <use href="#hud" y="225" width="1080" height="2195"/><text x="542" y="281" font-size="32">2(0)</text>
        <path d="M210 2179V2211H452M267 2211V2252" fill="none" stroke="#fff" stroke-width="14" stroke-linecap="round"/>
        <path d="M210 2179V2211H452M267 2211V2252" fill="none" stroke="#000" stroke-width="8" stroke-linecap="round"/>
        <g font-size="36" text-anchor="end" stroke="#fff" stroke-width="6" paint-order="stroke"><text x="452" y="2200">200 m</text><text x="452" y="2250">500 ft</text></g>
        <text x="17" y="2391" font-size="45" font-weight="500" stroke="#fff" stroke-opacity=".7" stroke-width="7" paint-order="stroke"><tspan fill="#4285f4">G</tspan><tspan fill="#ea4335">o</tspan><tspan fill="#fbbc05">o</tspan><tspan fill="#4285f4">g</tspan><tspan fill="#34a853">l</tspan><tspan fill="#ea4335">e</tspan></text>
      </svg>
      <aside class="relative flex w-[240px] shrink-0 flex-col gap-[21px] pt-[147px] pb-[93px] pl-[21px]">
        <button aria-label="My location" class="grid size-[105px] place-items-center rounded-[22px] bg-[#f6f6f6]/70 shadow-[0_6px_22px_rgba(0,0,0,.12)]"><svg class="size-[63px] fill-[#111]"><use href="#locate"/></svg></button>
        <button aria-label="Search" class="grid size-[105px] place-items-center rounded-[22px] bg-[#f6f6f6]/70 shadow-[0_6px_22px_rgba(0,0,0,.12)]"><svg class="size-[63px] fill-[#111]"><use href="#search"/></svg></button>
        <button aria-label="Add photo" class="grid size-[105px] place-items-center rounded-[22px] bg-[#f6f6f6]/70 shadow-[0_6px_22px_rgba(0,0,0,.12)]"><svg class="size-[63px] fill-[#111]"><use href="#photo"/></svg></button>
        <button aria-label="Measure distance" class="mt-auto grid size-[105px] place-items-center rounded-[22px] bg-[#f6f6f6]/70 shadow-[0_6px_22px_rgba(0,0,0,.12)]"><svg class="size-[63px] fill-[#111]"><use href="#ruler"/></svg></button>
        <button aria-label="Measure area" class="grid size-[105px] place-items-center rounded-[22px] bg-[#f6f6f6]/70 shadow-[0_6px_22px_rgba(0,0,0,.12)]"><svg class="size-[63px] fill-[#111]"><use href="#square"/></svg></button>
      </aside>
      <form class="relative min-w-0 flex-1 bg-[#fdfbff]/95 text-[37px] leading-[43px] text-black">
        <div class="flex h-[126px] items-center pl-[21px]">
          <h2 class="flex-1 pt-[4px] text-[47px] leading-[55px] text-[#1565c0]">Predios</h2>
          <button type="button" aria-label="Delete" class="grid w-[126px] place-items-center"><svg class="size-[95px] fill-[#111]"><use href="#trash"/></svg></button>
          <button type="button" aria-label="Full screen" class="grid w-[126px] place-items-center"><svg class="size-[95px] fill-[#111]"><use href="#full"/></svg></button>
          <button type="button" aria-label="Close" class="grid w-[126px] place-items-center"><svg class="size-[95px] fill-[#111]"><use href="#close"/></svg></button>
        </div>
        <div class="px-[21px] pt-[6px]">
          <h3 class="text-[#1565c0]">Feature Properties</h3>
          <div class="mt-2 whitespace-nowrap"><p>Name: Predios 1</p><p>Area: 211189.597m²</p><p>Perimeter: 1.863km</p></div>
          <h3 class="mt-[29px] text-[#1565c0]">Point Properties</h3>
          <div class="mt-2 whitespace-nowrap"><p>Time: Jun 13, 2025 6:26:40 p.m.</p><p>Lat: 12.145360000° N (16N 1342739.464m N)</p><p>Lon: 86.250843108° W (16N 581510.712m E)</p><p>Elv: 0.000m</p></div>
          <div class="mt-[23px] -mr-[1px] flex h-[147px] justify-between">
            <div class="pt-[6px]"><h3 class="text-[#1565c0]">From Current Point:</h3><p class="mt-2">N/A</p></div>
            <button type="button" aria-label="Locate from current point" class="grid size-[147px] place-items-center rounded-[42px] bg-[#d6e3ff] shadow-[0_3px_8px_rgba(0,0,0,.25)]"><svg class="size-[63px] fill-[#001b3d]"><use href="#locate"/></svg></button>
          </div>
          <label for="remarks" class="mt-[27px] block text-[#1565c0]">Remarks</label>
          <div class="mt-[45px] flex items-center pr-[20px] pl-[10px]">
            <input id="remarks" placeholder="Remarks" class="block h-[76px] min-w-0 flex-1 border-b-3 border-[#4a474e] pt-[2px] text-[47px] leading-[55px] outline-none placeholder:text-[#a3a0a6]">
            <button type="button" aria-label="Confirm" class="ml-[52px]"><svg class="size-[63px] fill-[#111]"><use href="#check"/></svg></button>
          </div>
        </div>
        <div class="mt-[52px] flex gap-[21px] pr-[3px] pl-[21px] font-medium text-white">
          <button type="button" class="flex h-[105px] flex-[413] items-center justify-center gap-[23px] rounded-[21px] bg-[#005cb8]"><svg class="size-[63px] fill-black"><use href="#trash"/></svg>Delete Point</button>
          <button type="button" class="flex h-[105px] flex-[380] items-center justify-center gap-[23px] rounded-[21px] bg-[#005cb8]"><svg class="size-[63px] fill-black"><use href="#directions"/></svg>Directions</button>
        </div>
        <hr class="mt-[21px] border-t-3 border-[#c9c5d0]">
        <div class="px-[21px]">
          <div class="mt-[65px] flex h-[63px] items-center justify-between pr-[10px]">
            <h2 class="text-[47px] leading-[55px] text-[#1565c0]">Layer Attributes</h2>
            <button type="button" aria-label="Save attributes"><svg class="size-[63px] fill-[#111]"><use href="#save"/></svg></button>
          </div>
          <label for="idp" class="mt-[57px] block text-[#1565c0]">IdPredio</label>
          <div class="mt-[24px] px-[10px]"><input id="idp" value="1000000001" class="block h-[76px] w-full border-b-3 border-[#4a474e] pt-[2px] text-[47px] leading-[55px] text-[#1d1b20] outline-none"></div>
          <hr class="mt-5 border-t-3 border-[#dcdadd]">
          <fieldset>
            <legend class="pt-[27px] text-[#1565c0]">Afectaciones del COVID sobre las ventas</legend>
            <label class="flex h-[86px] items-center gap-[30px] pl-[18px] text-[42px] leading-[49px]">
              <span class="grid"><input type="checkbox" checked class="col-start-1 row-start-1 size-[47px] appearance-none rounded-[5px] border-[5px] border-[#49454f] checked:border-[#005cb8] checked:bg-[#005cb8]"><svg class="pointer-events-none relative col-start-1 row-start-1 size-[40px] place-self-center fill-white stroke-white"><use href="#check"/></svg></span>
              <span class="pt-[4px]">se redujeron las ventas un 50%</span>
            </label>
            <hr class="border-t-3 border-[#dcdadd]">
            <label class="flex h-[84px] items-center gap-[30px] pl-[18px] text-[42px] leading-[49px]">
              <input type="checkbox" class="size-[47px] appearance-none rounded-[5px] border-[5px] border-[#49454f]">
              <span class="pt-[4px]">se despidió personal del negocio</span>
            </label>
            <hr class="border-t-3 border-[#dcdadd]">
          </fieldset>
          <label for="obs" class="mt-[27px] block text-[#1565c0]">Observaciones Medidores</label>
          <div class="mt-[24px] px-[10px]"><textarea id="obs" class="block h-[133px] w-full resize-none overflow-hidden border-b-5 border-[#585f71] pt-[10px] text-[47px] leading-[55px] text-[#1d1b20] outline-none">se observa un pequeño salidero/
goteo sobre uno de los medidores</textarea></div>
          <hr class="mt-[18px] border-t-3 border-[#dcdadd]">
          <label for="dist3" class="mt-[27px] block text-[#1565c0]">Distrito</label>
          <div class="relative mt-[2px]">
            <select id="dist3" class="block h-[126px] w-full appearance-none pt-[2px] pl-[21px] text-[42px] text-[#1d1b20]"><option>Carmen</option><option>Merced</option><option>Hospital</option><option>Catedral</option></select>
            <svg class="pointer-events-none absolute top-[57px] right-[49px] h-[13px] w-[26px] fill-[#49454f]"><use href="#caret"/></svg>
          </div>
          <hr class="border-t-3 border-[#dcdadd]">
        </div>
      </form>
    </main>
    <footer class="grid h-[40px] place-items-center bg-black"><div class="h-[12px] w-[336px] rounded-full bg-[#8e8e8e]"></div></footer>
  </section>
</div>
</body>
</html>
